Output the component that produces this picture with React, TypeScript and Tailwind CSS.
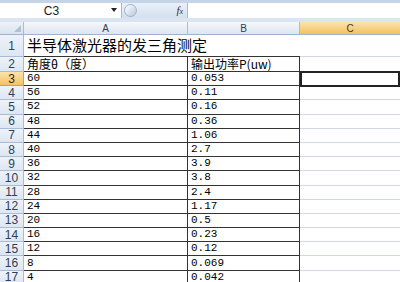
import React from 'react';

const rows: [string, string][] = [
  ['60', '0.053'],
  ['56', '0.11'],
  ['52', '0.16'],
  ['48', '0.36'],
  ['44', '1.06'],
  ['40', '2.7'],
  ['36', '3.9'],
  ['32', '3.8'],
  ['28', '2.4'],
  ['24', '1.17'],
  ['20', '0.5'],
  ['16', '0.23'],
  ['12', '0.12'],
  ['8', '0.069'],
  ['4', '0.042'],
  ['', '']
];

const cjk = { fontFamily: '"Noto Sans CJK SC", sans-serif' };
const mono = { fontFamily: '"Liberation Mono", "Noto Sans CJK SC", monospace' };
const rowNum = { fontFamily: '"Liberation Sans", Arial, sans-serif' };

const RowHeader = ({ n, active }: { n: number; active?: boolean }) => (
  <div
    className={`w-[24px] shrink-0 flex items-center justify-center text-[12px] border-r border-b ${
      active
        ? 'bg-gradient-to-b from-[#fbe3ad] to-[#f2c25f] text-[#3a2a10] border-[#c8a25a]'
        : 'bg-gradient-to-b from-[#eef3fa] to-[#dde6f2] text-[#2e3f56] border-[#a9bcd5]'
    }`}
    style={rowNum}
  >
    {n}
  </div>
);

const App = () => {
  return (
    <div className="w-[400px] h-[282px] overflow-hidden bg-white flex flex-col select-none">
      {/* name box + formula bar */}
      <div className="h-[22px] shrink-0 bg-gradient-to-b from-[#cfdbeb] to-[#dfe8f4] flex flex-col">
        <div className="h-[3px] bg-[#c6d4e7]" />
        <div className="h-[15px] flex">
          <div className="w-[122px] bg-white border-r border-[#a8b9cf] flex items-center relative">
            <span className="flex-1 text-center text-[12px] text-[#1b1b1b] pr-[18px]" style={rowNum}>
              C3
            </span>
            <span className="absolute right-[4px] top-[5px] w-0 h-0 border-l-[3px] border-r-[3px] border-t-[4px] border-l-transparent border-r-transparent border-t-[#222]" />
          </div>
          <div className="w-[66px] flex items-center bg-gradient-to-b from-[#e9f0f9] to-[#d4e0ee] border-r border-[#a8b9cf]">
            <div className="ml-[2px] w-[13px] h-[13px] rounded-full bg-gradient-to-br from-white to-[#b9c9dc] border border-[#9fb3cb]" />
            <span className="ml-auto mr-[4px] italic text-[11px] font-serif text-[#333]" style={{ fontFamily: '"Liberation Serif", serif' }}>
              f<span className="text-[8px]">x</span>
            </span>
          </div>
          <div className="flex-1 bg-white" />
        </div>
        <div className="h-[4px] bg-[#dbe5f1]" />
      </div>

      {/* column headers */}
      <div className="h-[13px] shrink-0 flex border-b border-[#9eb3cd]" style={rowNum}>
        <div className="w-[24px] shrink-0 bg-gradient-to-b from-[#eef3fa] to-[#d9e3ef] border-r border-[#a9bcd5] relative">
          <span className="absolute right-[2px] bottom-[2px] w-0 h-0 border-l-[7px] border-t-[7px] border-l-transparent border-t-transparent border-b-0 border-r-0" />
          <span className="absolute right-[2px] bottom-[2px] w-0 h-0 border-b-[7px] border-l-[7px] border-b-[#b4c0cf] border-l-transparent" />
        </div>
        <div className="w-[164px] shrink-0 bg-gradient-to-b from-[#f5f8fc] to-[#dde5f0] border-r border-[#a9bcd5] flex items-center justify-center text-[10px] text-[#2e3f56]">
          A
        </div>
        <div className="w-[112px] shrink-0 bg-gradient-to-b from-[#f5f8fc] to-[#dde5f0] border-r border-[#a9bcd5] flex items-center justify-center text-[10px] text-[#2e3f56]">
          B
        </div>
        <div className="flex-1 bg-gradient-to-b from-[#fbe3ad] to-[#f2c25f] flex items-center justify-center text-[10px] text-[#4a3a1a]">
          C
        </div>
      </div>

      {/* row 1 */}
      <div className="h-[22px] shrink-0 flex">
        <RowHeader n={1} />
        <div className="w-[276px] shrink-0 border-b border-[#333] flex items-center pl-[3px] text-[15px] text-black whitespace-nowrap" style={cjk}>
          半导体激光器的发三角测定
        </div>
        <div className="flex-1 border-b border-[#d0d7e5]" />
      </div>

      {/* row 2 */}
      <div className="h-[15px] shrink-0 flex">
        <RowHeader n={2} />
        <div className="w-[164px] shrink-0 border-r border-b border-[#333] flex items-center pl-[3px] text-[12px] leading-none text-black" style={cjk}>
          角度θ（度）
        </div>
        <div className="w-[112px] shrink-0 border-r border-b border-[#333] flex items-center pl-[3px] text-[12px] leading-none text-black whitespace-nowrap" style={cjk}>
          输出功率P(uw)
        </div>
        <div className="flex-1 border-b border-[#d0d7e5]" />
      </div>

      {rows.map(([a, b], i) => {
        const n = i + 3;
        const active = n === 3;
        return (
          <div key={n} className="h-[14.2px] shrink-0 flex">
            <RowHeader n={n} active={active} />
            <div className="w-[164px] shrink-0 border-r border-b border-[#333] flex items-center pl-[3px] text-[11px] leading-none text-black" style={mono}>
              {a}
            </div>
            <div className="w-[112px] shrink-0 border-r border-b border-[#333] flex items-center pl-[3px] text-[11px] leading-none text-black" style={mono}>
              {b}
            </div>
            <div
              className={`flex-1 ${
                active ? 'border-2 border-[#222] -mt-[1px] h-[16px]' : 'border-b border-[#d0d7e5]'
              }`}
            />
          </div>
        );
      })}
    </div>
  );
};

export default App;
